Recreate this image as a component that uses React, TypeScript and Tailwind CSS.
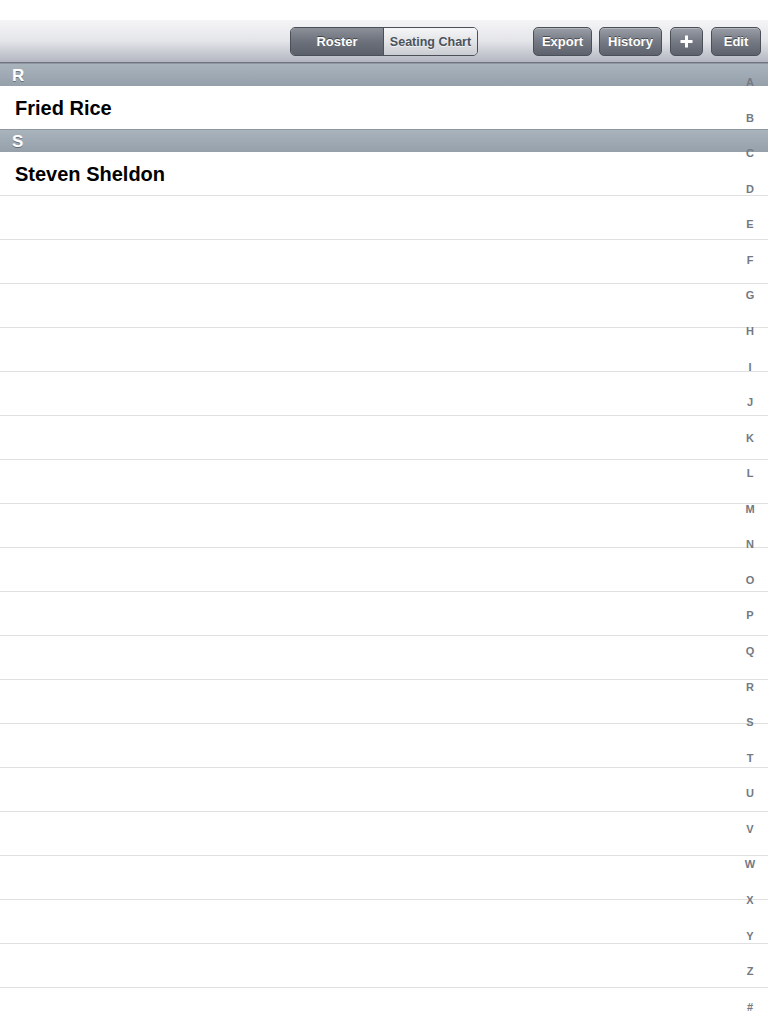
import React from 'react';

const letters = 'ABCDEFGHIJKLMNOPQRSTUVWXYZ#'.split('');

const sections = [
    { letter: 'R', names: ['Fried Rice'] },
    { letter: 'S', names: ['Steven Sheldon'] },
];

// Botón oscuro de la barra
const BarButton = ({ children, className = '' }: { children: React.ReactNode; className?: string }) => (
    <div
        className={`h-[29px] pt-[2px] flex items-center justify-center rounded-[5px] border border-[#4a4f58] bg-gradient-to-b from-[#9a9ea7] via-[#747983] to-[#5d626c] text-white text-[13px] font-bold [text-shadow:0_-1px_0_rgba(0,0,0,0.45)] shadow-[inset_0_1px_0_rgba(255,255,255,0.25)] ${className}`}
    >
        {children}
    </div>
);

const App = () => {
    const emptyRows = Array.from({ length: 18 });

    return (
        <div className="w-[768px] h-[1024px] bg-white relative overflow-hidden font-['Liberation_Sans',Arial,sans-serif]">
            <div className="h-[20px] bg-white" />

            {/* Barra de herramientas */}
            <div className="h-[43px] border-b border-[#6f7480] bg-gradient-to-b from-[#f5f5f7] via-[#e4e5e9] to-[#b3b6c1] flex items-center">
                <div className="ml-[290px] flex h-[29px] rounded-[5px] border border-[#4a4f58] overflow-hidden">
                    <div className="w-[93px] pt-[2px] flex items-center justify-center bg-gradient-to-b from-[#8c9099] via-[#6c717b] to-[#5a5f69] text-white text-[13px] font-bold [text-shadow:0_-1px_0_rgba(0,0,0,0.45)] border-r border-[#4a4f58]">
                        Roster
                    </div>
                    <div className="w-[93px] pt-[2px] flex items-center justify-center bg-gradient-to-b from-[#f6f6f7] via-[#e3e4e7] to-[#c9ccd2] text-[#4b525c] text-[12.5px] font-bold [text-shadow:0_1px_0_rgba(255,255,255,0.7)]">
                        Seating Chart
                    </div>
                </div>
                <BarButton className="ml-[55px] w-[59px]">Export</BarButton>
                <BarButton className="ml-[7px] w-[63px]">History</BarButton>
                <BarButton className="ml-[8px] w-[33px]">
                    <svg width="15" height="15" viewBox="0 0 15 15" className="-mt-[2px]">
                        <path d="M7.5 1.5v12M1.5 7.5h12" stroke="white" strokeWidth="3" />
                    </svg>
                </BarButton>
                <BarButton className="ml-[8px] w-[50px]">Edit</BarButton>
            </div>

            {/* Lista */}
            {sections.map((s) => (
                <div key={s.letter}>
                    <div className="h-[23px] border-t border-[#8e97a1] bg-gradient-to-b from-[#a9b3bc] to-[#95a0ab] flex items-center pl-[12px] text-white text-[17px] font-bold leading-none [text-shadow:0_1px_0_rgba(60,70,80,0.6)]">
                        {s.letter}
                    </div>
                    {s.names.map((n, i) => (
                        <div
                            key={n}
                            className={`flex items-center pl-[15px] text-[20px] font-bold text-black ${
                                i === 0 && s.letter === 'S' ? 'h-[44px] border-b border-[#e0e0e0]' : 'h-[43px]'
                            }`}
                        >
                            {n}
                        </div>
                    ))}
                </div>
            ))}
            {emptyRows.map((_, i) => (
                <div key={i} className="h-[44px] border-b border-[#e0e0e0]" />
            ))}

            {/* Índice lateral */}
            <div className="absolute right-[11px] top-[77px] h-[936px] w-[14px] flex flex-col justify-between items-center">
                {letters.map((l) => (
                    <div key={l} className="text-[11px] font-bold text-[#737983] leading-none">
                        {l}
                    </div>
                ))}
            </div>
        </div>
    );
};

export default App;
